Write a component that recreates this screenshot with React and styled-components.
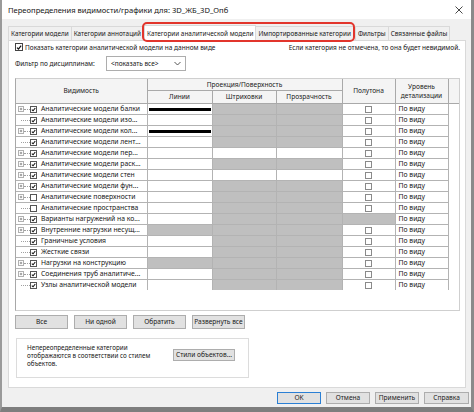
import React from "react";
import styled, { createGlobalStyle } from "styled-components";

const rows = [
	{ name: "Аналитические модели балки", exp: true, on: true, line: true, g: [0, 1, 1, 0] },
	{ name: "Аналитические модели изо...", exp: false, on: true, g: [0, 1, 1, 0] },
	{ name: "Аналитические модели кол...", exp: true, on: true, line: true, g: [0, 1, 1, 0] },
	{ name: "Аналитические модели лент...", exp: false, on: true, g: [0, 1, 1, 0] },
	{ name: "Аналитические модели пер...", exp: true, on: true, g: [0, 0, 0, 0] },
	{ name: "Аналитические модели раск...", exp: true, on: true, g: [0, 1, 1, 0] },
	{ name: "Аналитические модели стен", exp: true, on: true, g: [0, 0, 0, 0] },
	{ name: "Аналитические модели фун...", exp: true, on: true, g: [0, 1, 1, 0] },
	{ name: "Аналитические поверхности", exp: true, on: false, g: [0, 1, 1, 0] },
	{ name: "Аналитические пространства", exp: false, on: false, g: [0, 1, 1, 0] },
	{ name: "Варианты нагружений на ко...", exp: true, on: true, g: [0, 1, 1, 1] },
	{ name: "Внутренние нагрузки несущ...", exp: true, on: true, g: [1, 1, 1, 0] },
	{ name: "Граничные условия", exp: false, on: true, g: [0, 1, 1, 0] },
	{ name: "Жесткие связи", exp: false, on: true, g: [0, 1, 1, 0] },
	{ name: "Нагрузки на конструкцию", exp: true, on: true, g: [1, 1, 1, 0] },
	{ name: "Соединения труб аналитиче...", exp: true, on: true, g: [0, 1, 1, 0] },
	{ name: "Узлы аналитической модели", exp: false, on: true, g: [0, 1, 1, 0] },
];

const Tick = () => (
	<svg width="7" height="7" viewBox="0 0 7 7">
		<path d="M1.2 3.6 L2.9 5.3 L6 1.4" stroke="#111" strokeWidth="1.5" fill="none" />
	</svg>
);

const Plus = () => (
	<svg width="6" height="6" viewBox="0 0 6 6">
		<rect x="0.5" y="0.5" width="5" height="5" fill="#fff" stroke="#b0b0b0" />
		<path d="M1.8 3 H4.2 M3 1.8 V4.2" stroke="#777" strokeWidth="0.8" />
	</svg>
);

const App = () => {
	return (
		<>
			<GlobalStyle />
			<Window>
				<TitleBar>
					<span>Переопределения видимости/графики для: 3D_ЖБ_3D_Опб</span>
					<svg width="8" height="8" viewBox="0 0 8 8">
						<path d="M0.5 0.5 L7.5 7.5 M7.5 0.5 L0.5 7.5" stroke="#333" strokeWidth="0.9" />
					</svg>
				</TitleBar>
				<Body>
					<Tabs>
						<Tab>Категории модели</Tab>
						<Tab>Категории аннотаций</Tab>
						<Marked>
							<Tab $active>Категории аналитической модели</Tab>
							<Tab>Импортированные категории</Tab>
						</Marked>
						<Tab>Фильтры</Tab>
						<Tab>Связанные файлы</Tab>
					</Tabs>
					<Panel>
						<TopRow>
							<ShowLabel>
								<BigCheck>
									<Tick />
								</BigCheck>
								Показать категории аналитической модели на данном виде
							</ShowLabel>
							<span>Если категория не отмечена, то она будет невидимой.</span>
						</TopRow>
						<FilterRow>
							<FilterLabel>Фильтр по дисциплинам:</FilterLabel>
							<Select>
								<span>&lt;показать все&gt;</span>
								<svg width="7" height="5" viewBox="0 0 7 5">
									<path d="M0.5 1 L3.5 4 L6.5 1" stroke="#444" strokeWidth="0.9" fill="none" />
								</svg>
							</Select>
						</FilterRow>
						<GridBox>
							<Grid>
								<colgroup>
									<col style={{ width: 131 }} />
									<col style={{ width: 65 }} />
									<col style={{ width: 64 }} />
									<col style={{ width: 66 }} />
									<col style={{ width: 53 }} />
									<col style={{ width: 53 }} />
									<col />
								</colgroup>
								<thead>
									<tr>
										<Th rowSpan={2}>Видимость</Th>
										<Th colSpan={3} $h={11}>
											Проекция/Поверхность
										</Th>
										<Th rowSpan={2}>Полутона</Th>
										<Th rowSpan={2} $lh={9}>
											Уровень
											<br />
											детализации
										</Th>
										<Th rowSpan={2} />
									</tr>
									<tr>
										<Th $h={12}>Линии</Th>
										<Th $h={12}>Штриховки</Th>
										<Th $h={12}>Прозрачность</Th>
									</tr>
								</thead>
								<tbody>
									{rows.map((r) => (
										<tr key={r.name}>
											<Td>
												<Tree>
													{r.exp ? (
														<>
															<Plus />
															<Dots $w={6} />
														</>
													) : (
														<Dots $w={9} $gap={3} />
													)}
													<SmallCheck>{r.on && <Tick />}</SmallCheck>
													<Name>{r.name}</Name>
												</Tree>
											</Td>
											<Td $gray={r.g[0]}>{r.line && <Bar />}</Td>
											<Td $gray={r.g[1]} />
											<Td $gray={r.g[2]} />
											<Td $gray={r.g[3]}>{!r.g[3] && <HalfCheck />}</Td>
											<Td $pad>По виду</Td>
											<Filler />
										</tr>
									))}
								</tbody>
							</Grid>
						</GridBox>
						<ButtonRow>
							<Button>Все</Button>
							<Button>Ни одной</Button>
							<Button>Обратить</Button>
							<Button>Развернуть все</Button>
						</ButtonRow>
						<GroupBox>
							<Note>
								Непереопределенные категории
								<br />
								отображаются в соответствии со стилем
								<br />
								объектов.
							</Note>
							<Button $w={62}>Стили объектов...</Button>
						</GroupBox>
					</Panel>
				</Body>
				<Footer>
					<Button $w={44} $primary>
						OK
					</Button>
					<Button $w={44}>Отмена</Button>
					<Button $w={44}>Применить</Button>
					<Button $w={45}>Справка</Button>
				</Footer>
			</Window>
		</>
	);
};

export default App;

const GlobalStyle = createGlobalStyle`
	html, body {
		margin: 0;
		padding: 0;
		background: #fff;
	}
	body {
		font-family: "Noto Sans", "Open Sans", sans-serif;
		color: #161616;
	}
`;

const Window = styled.div`
	width: 474px;
	height: 412px;
	box-sizing: border-box;
	display: flex;
	flex-direction: column;
	overflow: hidden;
	background: #f0f0f0;
	border-left: 2px solid #9a9a9a;
	border-right: 3px solid #8a8a8a;
	border-bottom: 5px solid #7e7e7e;
`;

const TitleBar = styled.div`
	height: 19px;
	flex-shrink: 0;
	display: flex;
	align-items: center;
	justify-content: space-between;
	padding: 0 8px 0 6px;
	background: #fff;
	font-size: 7.6px;
`;

const Body = styled.div`
	display: flex;
	flex-direction: column;
	padding: 5px 5px 0 6px;
`;

const Tabs = styled.div`
	display: flex;
	align-items: flex-end;
	height: 16px;
	position: relative;
	z-index: 1;
`;

const Marked = styled.div`
	display: flex;
	align-items: flex-end;
	height: 16px;
	outline: 2px solid #e2352c;
	border-radius: 3px;
	margin: 0 2px 0 1px;
`;

const Tab = styled.div`
	height: ${(p) => (p.$active ? 16 : 14)}px;
	box-sizing: border-box;
	display: flex;
	align-items: center;
	padding: 0 2px;
	margin-right: -1px;
	border: 1px solid #d9d9d9;
	border-bottom: ${(p) => (p.$active ? "1px solid #fff" : "none")};
	background: ${(p) => (p.$active ? "#fff" : "#f0f0f0")};
	font-size: 6.4px;
	white-space: nowrap;
	margin-bottom: ${(p) => (p.$active ? "-1px" : "0")};
`;

const Panel = styled.div`
	height: 348px;
	box-sizing: border-box;
	display: flex;
	flex-direction: column;
	padding: 1px 5px 0 6px;
	background: #fff;
	border: 1px solid #d9d9d9;
	font-size: 6.5px;
`;

const TopRow = styled.div`
	height: 10px;
	display: flex;
	align-items: center;
	justify-content: space-between;
`;

const ShowLabel = styled.label`
	display: flex;
	align-items: center;
`;

const BigCheck = styled.span`
	width: 8px;
	height: 8px;
	box-sizing: border-box;
	border: 1px solid #444;
	margin-right: 2px;
	display: flex;
	align-items: center;
	justify-content: center;
`;

const FilterRow = styled.div`
	margin-top: 4px;
	height: 15px;
	display: flex;
	align-items: center;
`;

const FilterLabel = styled.span`
	width: 91px;
`;

const Select = styled.div`
	width: 80px;
	height: 15px;
	box-sizing: border-box;
	display: flex;
	align-items: center;
	justify-content: space-between;
	padding: 0 4px;
	border: 1px solid #adadad;
	background: #fff;
`;

const GridBox = styled.div`
	margin-top: 7px;
	height: 233px;
	flex-shrink: 0;
	box-sizing: border-box;
	border: 1px solid #cfcfcf;
	border-left-color: #a8a8a8;
	background: #fff;
	overflow: hidden;
`;

const Grid = styled.table`
	width: 100%;
	table-layout: fixed;
	border-collapse: collapse;
	border-style: hidden;
`;

const Th = styled.th`
	padding: 0;
	height: ${(p) => (p.$h ? `${p.$h}px` : "auto")};
	border: 1px solid #a9a9a9;
	background: #f4f4f4;
	font-weight: normal;
	font-size: 6.6px;
	line-height: ${(p) => p.$lh || 8}px;
	text-align: center;
	color: #222;
	overflow: hidden;
`;

const Td = styled.td`
	padding: 0 0 0 ${(p) => (p.$pad ? 3 : 0)}px;
	height: 10px;
	border: 1px solid #b3b3b3;
	background: ${(p) => (p.$gray ? "#bfbfbf" : "#fff")};
	font-size: 6.8px;
	line-height: 10px;
	white-space: nowrap;
	overflow: hidden;
	text-align: ${(p) => (p.$pad ? "left" : "center")};
	vertical-align: middle;
`;

const Filler = styled.td`
	padding: 0;
	border: none;
`;

const Tree = styled.div`
	display: flex;
	align-items: center;
	padding-left: 2px;
	height: 10px;
	overflow: hidden;
`;

const Dots = styled.span`
	width: ${(p) => p.$w}px;
	margin-left: ${(p) => p.$gap || 0}px;
	height: 0;
	flex-shrink: 0;
	border-top: 1px dotted #a0a0a0;
`;

const SmallCheck = styled.span`
	width: 7px;
	height: 7px;
	box-sizing: border-box;
	border: 1px solid #555;
	background: #fff;
	display: flex;
	align-items: center;
	justify-content: center;
	flex-shrink: 0;
`;

const Name = styled.span`
	margin-left: 4px;
	font-size: 6.8px;
	line-height: 10px;
`;

const Bar = styled.div`
	height: 3px;
	margin: 0 1px;
	background: #000;
`;

const HalfCheck = styled.div`
	width: 7px;
	height: 7px;
	box-sizing: border-box;
	margin: 0 auto;
	border: 1px solid #8a8a8a;
	background: #fff;
`;

const ButtonRow = styled.div`
	margin-top: 4px;
	display: flex;
	gap: 6px;
`;

const Button = styled.button`
	width: ${(p) => p.$w || 53}px;
	height: ${(p) => (p.$w ? 12 : 14)}px;
	box-sizing: border-box;
	padding: 0;
	border: 1px solid ${(p) => (p.$primary ? "#2a7fd4" : "#adadad")};
	background: #e1e1e1;
	font-family: "Noto Sans", "Open Sans", sans-serif;
	font-size: 6.6px;
	line-height: 8px;
	color: #1a1a1a;
	white-space: nowrap;
	flex-shrink: 0;
`;

const GroupBox = styled.div`
	margin-top: 9px;
	margin-left: 1px;
	width: 233px;
	height: 40px;
	box-sizing: border-box;
	display: flex;
	align-items: flex-start;
	padding: 5px 0 0 10px;
	border: 1px solid #dcdcdc;

	${Button} {
		margin-top: 5px;
		height: 12px;
	}
`;

const Note = styled.div`
	width: 136px;
	margin-right: 10px;
	font-size: 6.3px;
	line-height: 8px;
`;

const Footer = styled.div`
	display: flex;
	justify-content: flex-end;
	gap: 5px;
	padding: 4px 2px 0 0;
`;
